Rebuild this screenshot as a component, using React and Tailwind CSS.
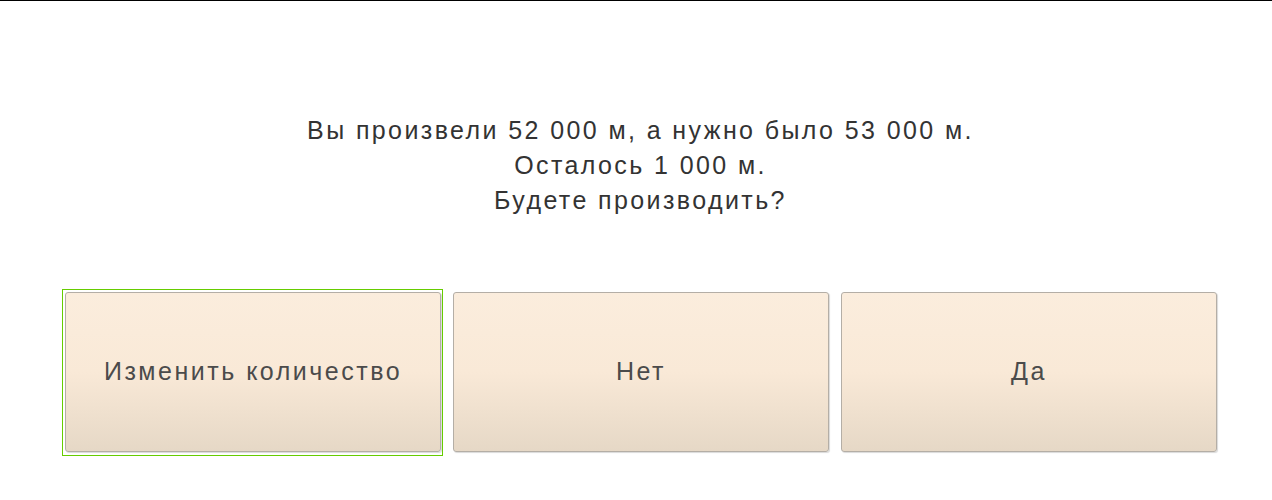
export default function App() {
  const btn =
    "h-[160px] rounded-[3px] border border-[#b4aea6] bg-gradient-to-b from-[#fbeddd] via-[#f9e9d7] to-[#e6d8c6] shadow-[1px_1px_1px_rgba(0,0,0,0.15)] flex items-center justify-center text-[25px] tracking-[2.5px] text-[#4b4b4b]";
  return (
    <div
      className="w-full h-[500px] bg-white border-t border-black flex flex-col"
      style={{ fontFamily: '"Liberation Sans", Arial, sans-serif' }}
    >
      <div className="pt-[112px] pl-[9px] text-center text-[25px] tracking-[2.4px] leading-[35px] text-[#333333]">
        <div>Вы произвели 52 000 м, а нужно было 53 000 м.</div>
        <div>Осталось 1 000 м.</div>
        <div>Будете производить?</div>
      </div>
      <div className="mt-[74px] pl-[65px] grid grid-cols-[376px_376px_376px] gap-x-[12px]">
        <div className="-ml-[2px] -mt-[2px] -mr-[1px] -mb-[3px] pl-[2px] pt-[2px] pr-[1px] pb-[3px] outline outline-1 outline-[#66cc00]">
          <div className={btn}>Изменить количество</div>
        </div>
        <div className={btn}>Нет</div>
        <div className={btn}>Да</div>
      </div>
    </div>
  );
}
